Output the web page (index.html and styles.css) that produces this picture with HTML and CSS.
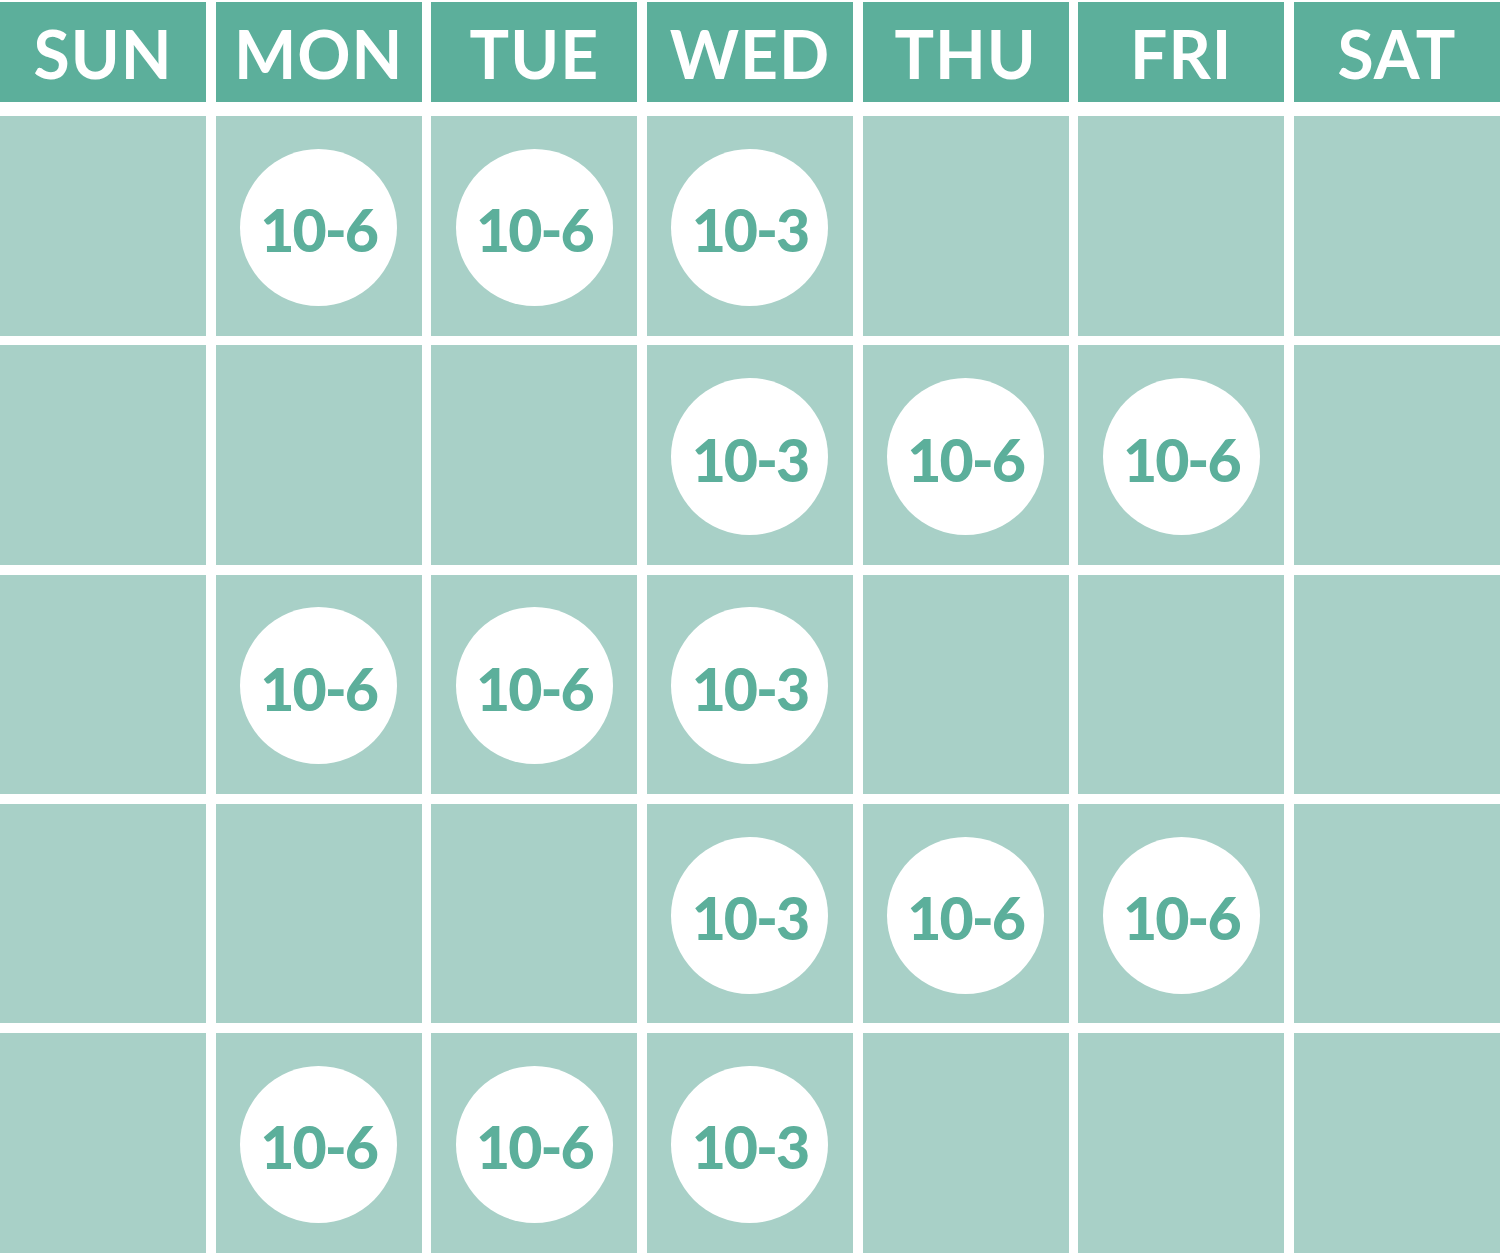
FILE: index.html
```html
<!DOCTYPE html>
<html lang="en">
<head>
<meta charset="utf-8">
<title>Schedule</title>
<link rel="stylesheet" href="styles.css">
</head>
<body>
<div class="calendar">
  <div class="head">
    <div class="day">SUN</div>
    <div class="day">MON</div>
    <div class="day">TUE</div>
    <div class="day">WED</div>
    <div class="day">THU</div>
    <div class="day">FRI</div>
    <div class="day">SAT</div>
  </div>
  <div class="grid">
    <div class="cell"></div>
    <div class="cell"><span class="hours">10-6</span></div>
    <div class="cell"><span class="hours">10-6</span></div>
    <div class="cell"><span class="hours">10-3</span></div>
    <div class="cell"></div>
    <div class="cell"></div>
    <div class="cell"></div>

    <div class="cell"></div>
    <div class="cell"></div>
    <div class="cell"></div>
    <div class="cell"><span class="hours">10-3</span></div>
    <div class="cell"><span class="hours">10-6</span></div>
    <div class="cell"><span class="hours">10-6</span></div>
    <div class="cell"></div>

    <div class="cell"></div>
    <div class="cell"><span class="hours">10-6</span></div>
    <div class="cell"><span class="hours">10-6</span></div>
    <div class="cell"><span class="hours">10-3</span></div>
    <div class="cell"></div>
    <div class="cell"></div>
    <div class="cell"></div>

    <div class="cell"></div>
    <div class="cell"></div>
    <div class="cell"></div>
    <div class="cell"><span class="hours">10-3</span></div>
    <div class="cell"><span class="hours">10-6</span></div>
    <div class="cell"><span class="hours">10-6</span></div>
    <div class="cell"></div>

    <div class="cell"></div>
    <div class="cell"><span class="hours">10-6</span></div>
    <div class="cell"><span class="hours">10-6</span></div>
    <div class="cell"><span class="hours">10-3</span></div>
    <div class="cell"></div>
    <div class="cell"></div>
    <div class="cell"></div>
  </div>
</div>
</body>
</html>
```

FILE: styles.css
```css
html, body {
  margin: 0;
  padding: 0;
  background: #ffffff;
}

body {
  font-family: Lato, "Liberation Sans", sans-serif;
}

.calendar {
  width: 1500px;
  padding-top: 2px;
}

.head {
  display: grid;
  grid-template-columns: repeat(7, 1fr);
  column-gap: 9.5px;
  height: 100px;
  margin-bottom: 14px;
}

.day {
  background: #5caf9b;
  color: #ffffff;
  display: flex;
  align-items: center;
  justify-content: center;
  font-size: 66px;
  font-weight: 700;
  letter-spacing: 1px;
  line-height: 1;
  padding-top: 4px;
  box-sizing: border-box;
}

.grid {
  display: grid;
  grid-template-columns: repeat(7, 1fr);
  grid-auto-rows: 219.5px;
  column-gap: 9.5px;
  row-gap: 9.75px;
}

.cell {
  background: #a8d0c7;
  display: flex;
  align-items: center;
  justify-content: center;
}

.hours {
  width: 157px;
  height: 157px;
  border-radius: 50%;
  background: #ffffff;
  color: #5caf9b;
  display: flex;
  align-items: center;
  justify-content: center;
  font-size: 59px;
  font-weight: 900;
  letter-spacing: -2px;
  line-height: 1;
  margin-top: 3px;
  padding-top: 5px;
  box-sizing: border-box;
}
```
